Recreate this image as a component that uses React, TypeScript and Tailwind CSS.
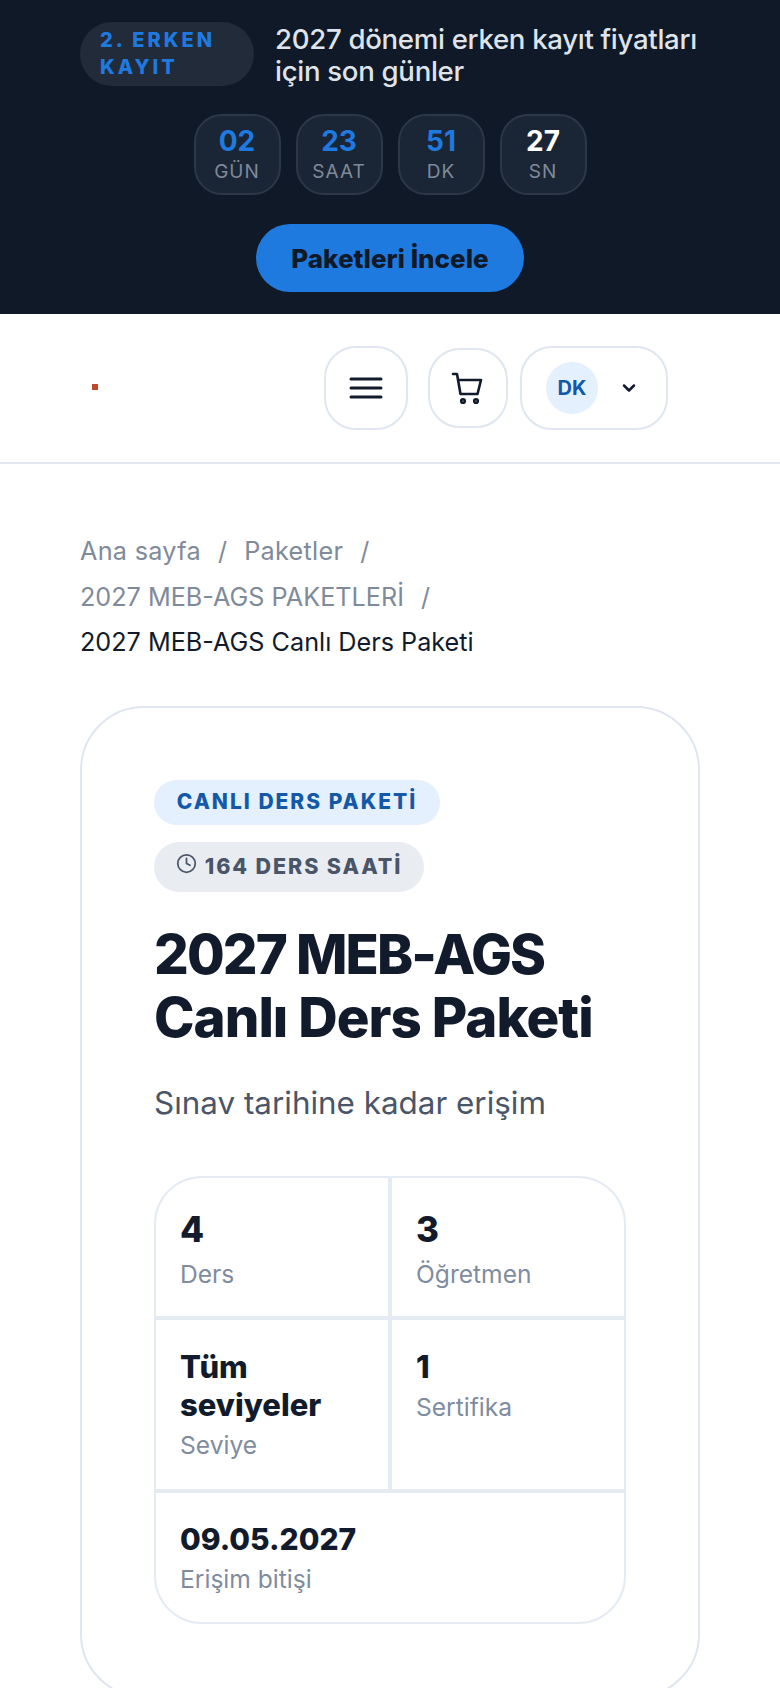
import { ChevronDown, Clock } from "lucide-react";

const timer = [
  { value: "02", label: "GÜN", accent: true },
  { value: "23", label: "SAAT", accent: true },
  { value: "51", label: "DK", accent: true },
  { value: "27", label: "SN", accent: false },
];

function StatCell({
  value,
  label,
  big = false,
  className = "",
  valueClassName = "text-[31px]",
}: {
  value: string;
  label: string;
  big?: boolean;
  className?: string;
  valueClassName?: string;
}) {
  return (
    <div className={`bg-white pl-[24px] pr-4 ${className}`}>
      <div
        className={
          big
            ? "text-[35px] leading-[44px] font-extrabold text-[#121b2b]"
            : `${valueClassName} leading-[38px] font-extrabold text-[#121b2b]`
        }
      >
        {value}
      </div>
      <div className={`text-[24.6px] leading-[36px] text-[#7f8c9f] ${big ? "mt-[5px]" : "mt-[3px]"}`}>{label}</div>
    </div>
  );
}

export default function App() {
  return (
    <div className="h-[1688px] overflow-hidden bg-white font-['Inter',sans-serif]">
      {/* Campaign banner */}
      <div className="h-[314px] bg-[#0f1928] px-20 pt-[22px]">
        <div className="flex gap-[21px]">
          <div className="w-[174px] h-[64px] shrink-0 rounded-[32px] bg-[#222b39] pl-5 pt-[5px] text-[20px] leading-[27px] font-extrabold tracking-[3px] text-[#1f7ae0]">
            2. ERKEN KAYIT
          </div>
          <div className="text-[27.6px] leading-[32px] font-medium text-[#dfe4ea] tracking-[-0.3px] pt-[1px]">
            2027 dönemi erken kayıt fiyatları için son günler
          </div>
        </div>
        <div className="flex justify-center gap-[15px] mt-[27px]">
          {timer.map((t) => (
            <div
              key={t.label}
              className="w-[87px] h-[81px] rounded-[28px] border-2 border-[#2c3748] bg-[#1a2535] flex flex-col items-center pt-[8px]"
            >
              <div className={`text-[28px] leading-[34px] font-bold ${t.accent ? "text-[#1f7ae0]" : "text-white"}`}>
                {t.value}
              </div>
              <div className="text-[19px] leading-[26px] tracking-[1px] text-[#7f8a9a] mt-[1px]">{t.label}</div>
            </div>
          ))}
        </div>
        <div className="flex justify-center mt-[29px]">
          <div className="w-[268px] h-[68px] rounded-[34px] bg-[#1f7ae0] flex items-center justify-center text-[26px] font-extrabold text-[#0f1928]">
            Paketleri İncele
          </div>
        </div>
      </div>

      {/* Header */}
      <div className="h-[150px] border-b-2 border-[#dfe6f0] flex items-center pl-[92px] pr-[112px] pb-[1px]">
        <div className="w-[6px] h-[6px] bg-[#c0492b] mb-[2px]" />
        <div className="ml-auto flex items-center">
          <div className="w-[84px] h-[84px] rounded-[32px] border-2 border-[#dfe6f0] flex items-center justify-center">
            <svg width="34" height="24" viewBox="0 0 34 24" fill="none" stroke="#121b2b" strokeWidth="3" strokeLinecap="round">
              <path d="M2 3h30M2 12h30M2 21h30" />
            </svg>
          </div>
          <div className="w-[80px] h-[80px] ml-[20px] rounded-[32px] border-2 border-[#dfe6f0] flex items-center justify-center">
            <svg width="34" height="34" viewBox="0 0 34 34" fill="none" stroke="#121b2b" strokeWidth="2.6" strokeLinecap="round" strokeLinejoin="round">
              <path d="M2 3h4l3.5 20h17L30 9H7" />
              <circle cx="12" cy="30" r="1.8" />
              <circle cx="25" cy="30" r="1.8" />
            </svg>
          </div>
          <div className="w-[148px] h-[84px] ml-[12px] rounded-[32px] border-2 border-[#dfe6f0] flex items-center pl-[24px]">
            <div className="w-[52px] h-[52px] rounded-full bg-[#e4f0fd] flex items-center justify-center text-[20px] font-bold text-[#1458a8]">
              DK
            </div>
            <ChevronDown size={20} strokeWidth={3} className="ml-[21px] text-[#121b2b]" />
          </div>
        </div>
      </div>

      {/* Breadcrumb */}
      <div className="px-20 pt-[65px] text-[25.2px] leading-[45.5px] text-[#7f8a9a]">
        <div>
          <span className="tracking-[0.3px]">Ana sayfa</span> <span className="mx-[10px]">/</span>{" "}
          <span className="tracking-[0.3px]">Paketler</span> <span className="mx-[10px]">/</span>
        </div>
        <div>
          2027 MEB-AGS PAKETLERİ <span className="mx-[10px]">/</span>
        </div>
        <div className="text-[#121b2b]">2027 MEB-AGS Canlı Ders Paketi</div>
      </div>

      {/* Package card */}
      <div className="mx-20 mt-[40px] rounded-[64px] border-2 border-[#dfe6f0] px-[72px] pt-[72px] pb-[72px]">
        <div className="flex flex-col items-start">
          <div className="h-[45px] w-[286px] rounded-full bg-[#e4f0fd] flex items-center justify-center text-[21px] font-extrabold tracking-[2px] text-[#1458a8]">
            CANLI DERS PAKETİ
          </div>
          <div className="h-[50px] w-[270px] mt-[17px] rounded-full bg-[#e9edf2] flex items-center justify-center gap-[8px] text-[21.5px] font-extrabold tracking-[1.9px] text-[#4a5568]">
            <Clock size={21} strokeWidth={2} className="mb-[6px]" />
            164 DERS SAATİ
          </div>
        </div>
        <h1 className="mt-[31px] text-[54.6px] leading-[63px] font-extrabold tracking-[-1px] text-[#121b2b]">
          <span className="block tracking-[-1.9px]">2027 MEB-AGS</span>
          <span className="block">Canlı Ders Paketi</span>
        </h1>
        <p className="mt-[32px] text-[31.4px] leading-[44px] text-[#4a5568]">Sınav tarihine kadar erişim</p>

        <div className="mt-[51px] rounded-[48px] border-2 border-[#e5ebf3] bg-[#e5ebf3] overflow-hidden grid grid-cols-2 gap-[4px]">
          <StatCell value="4" label="Ders" big className="h-[138px] pt-[29px]" />
          <StatCell value="3" label="Öğretmen" big className="h-[138px] pt-[29px]" />
          <StatCell value="Tüm seviyeler" label="Seviye" className="h-[169px] pt-[28px]" />
          <StatCell value="1" label="Sertifika" className="h-[169px] pt-[28px]" />
          <StatCell
            value="09.05.2027"
            label="Erişim bitişi"
            valueClassName="text-[30px]"
            className="col-span-2 h-[129px] pt-[27px]"
          />
        </div>
      </div>
    </div>
  );
}
